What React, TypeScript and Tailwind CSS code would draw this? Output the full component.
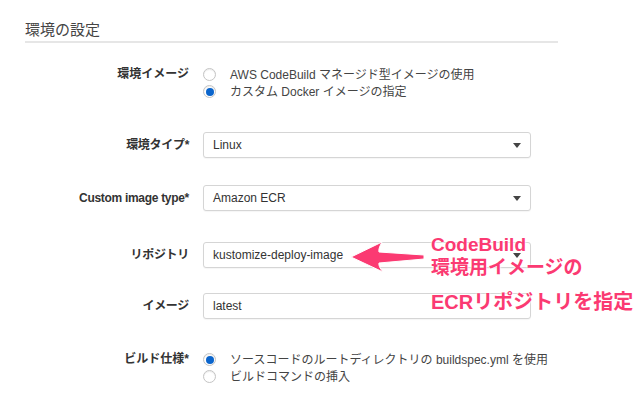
const FONT = "font-['Liberation_Sans','Noto_Sans_CJK_JP',sans-serif]"

const Radio = ({ checked }: { checked?: boolean }) => (
    <span className="flex items-center justify-center w-[13px] h-[13px] rounded-full border border-[#c4c4c4] bg-white shadow-[inset_0_1px_1px_rgba(0,0,0,0.08)]">
        {checked && <span className="w-[8px] h-[8px] rounded-full bg-[#0b65cc]" />}
    </span>
)

const RadioGroup = ({ label, options, selected }: { label: string; options: string[]; selected: number }) => (
    <div className="flex items-start">
        <div className="w-[189px] text-right text-[12px] leading-[17px] font-bold text-[#333]">{label}</div>
        <div className="ml-[14px] flex flex-col">
            {options.map((opt, i) => (
                <div key={opt} className="flex items-center h-[17px]">
                    <Radio checked={i === selected} />
                    <span className="ml-[14px] text-[12px] text-[#444]">{opt}</span>
                </div>
            ))}
        </div>
    </div>
)

const Field = ({ label, value, select }: { label: string; value: string; select?: boolean }) => (
    <div className="flex items-center">
        <div className="w-[189px] text-right text-[12px] tracking-[-0.3px] font-bold text-[#333]">{label}</div>
        <div className="ml-[14px] w-[328px] h-[26px] flex items-center justify-between pl-[9px] pr-[9px] bg-white border border-[#d5d5d5] rounded-[3px] shadow-[0_1px_1px_rgba(0,0,0,0.04)]">
            <span className="text-[12px] text-[#333]">{value}</span>
            {select && (
                <span className="w-0 h-0 border-l-[4px] border-r-[4px] border-t-[5px] border-l-transparent border-r-transparent border-t-[#444]" />
            )}
        </div>
    </div>
)

export default function App() {
    return (
        <div className={`relative w-[640px] h-[409px] bg-white overflow-hidden ${FONT}`}>
            <div className="ml-[25px] w-[533px] pt-[20px] pb-[1px] border-b-2 border-[#e6e6e6]">
                <h2 className="text-[15px] leading-[20px] text-[#444]">環境の設定</h2>
            </div>

            <div className="mt-[23px]">
                <RadioGroup
                    label="環境イメージ"
                    options={["AWS CodeBuild マネージド型イメージの使用", "カスタム Docker イメージの指定"]}
                    selected={1}
                />
            </div>
            <div className="mt-[32px]">
                <Field label="環境タイプ*" value="Linux" select />
            </div>
            <div className="mt-[27px]">
                <Field label="Custom image type*" value="Amazon ECR" select />
            </div>
            <div className="mt-[31px]">
                <Field label="リポジトリ" value="kustomize-deploy-image" select />
            </div>
            <div className="mt-[25px]">
                <Field label="イメージ" value="latest" />
            </div>
            <div className="mt-[32px]">
                <RadioGroup
                    label="ビルド仕様*"
                    options={["ソースコードのルートディレクトリの buildspec.yml を使用", "ビルドコマンドの挿入"]}
                    selected={0}
                />
            </div>

            {/* callout */}
            <svg className="absolute left-0 top-0" width="640" height="409" viewBox="0 0 640 409">
                <path
                    d="M351 257 L382 242 Q378 249 379 252 L424 255 L424 259 L379 263 Q378 266 383 272 Z"
                    fill="#fb3a72"
                    stroke="#fff"
                    strokeWidth="1"
                    strokeLinejoin="round"
                />
            </svg>
            <div className="absolute left-[431px] top-[234px] whitespace-nowrap font-bold text-[#fb3a72] [text-shadow:0_0_2px_#fff,0_0_3px_#fff]">
                <div className="text-[19px] leading-[22px]">CodeBuild</div>
                <div className="text-[19px] leading-[24px]">環境用イメージの</div>
                <div className="mt-[9px] text-[20px] leading-[26px]">ECRリポジトリを指定</div>
            </div>
        </div>
    )
}
